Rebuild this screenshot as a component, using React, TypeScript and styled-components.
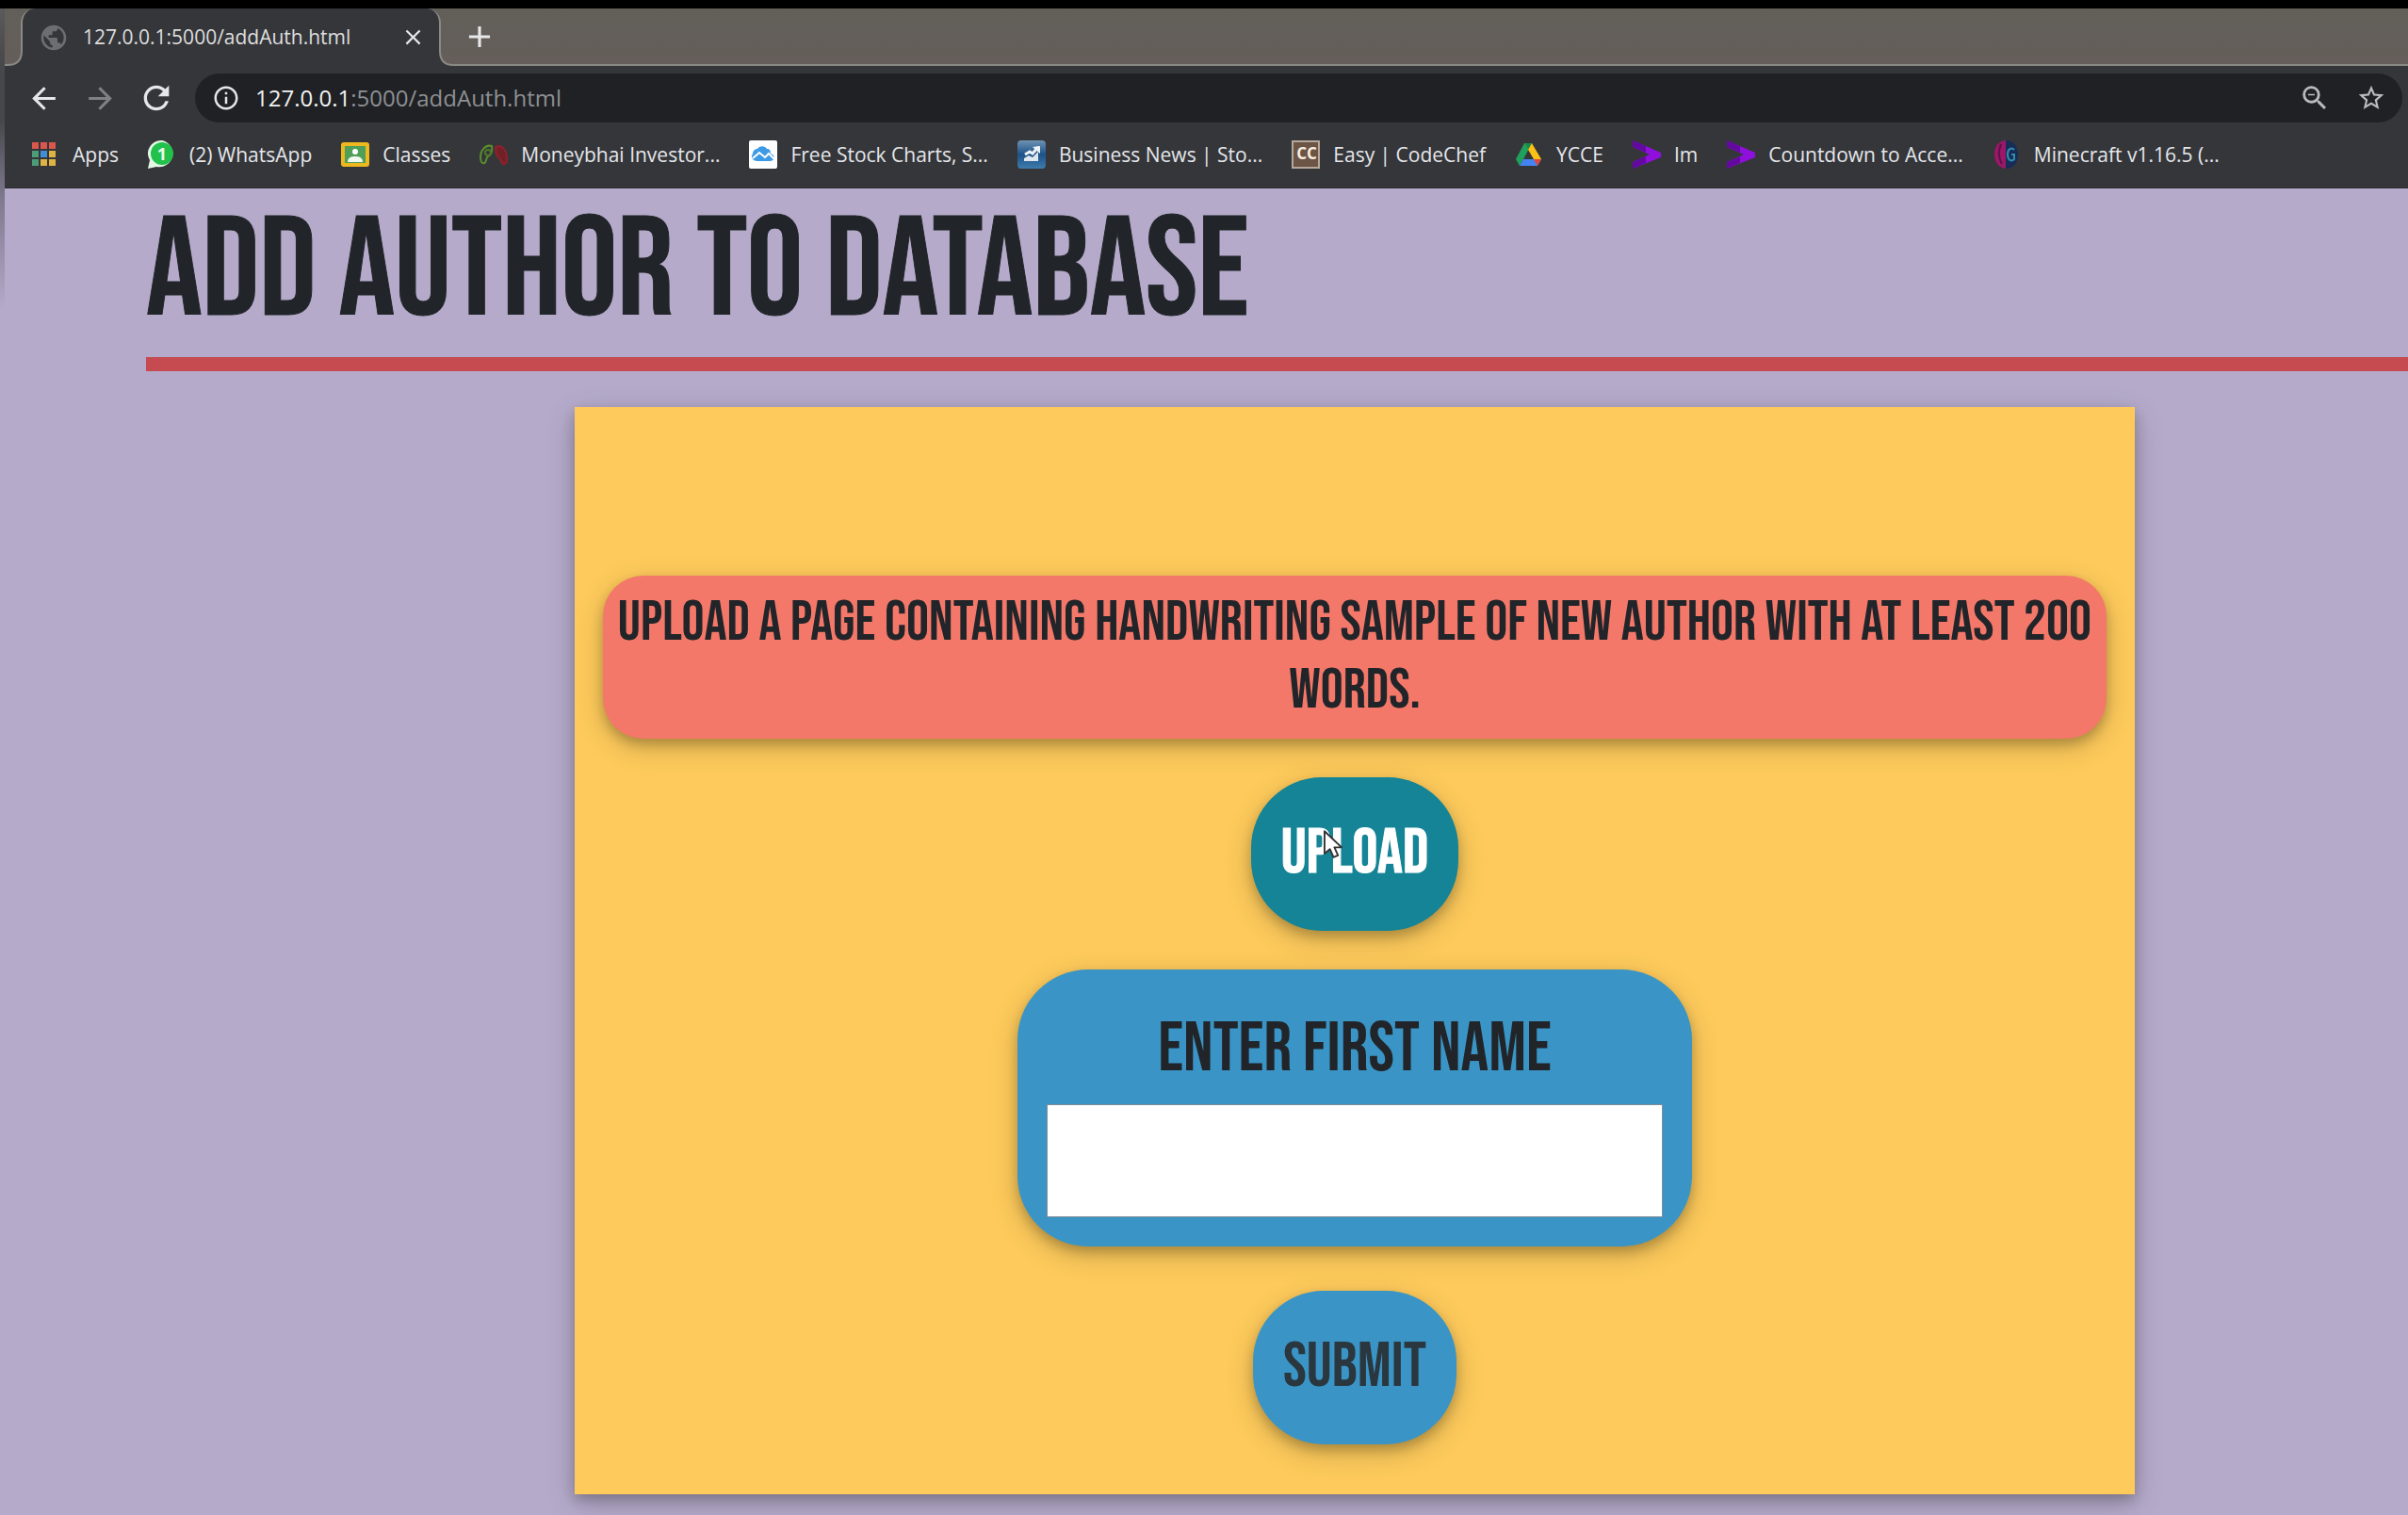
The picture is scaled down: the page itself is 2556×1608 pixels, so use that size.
import React, { useState } from 'react';
import styled, { createGlobalStyle, css } from 'styled-components';
import {
  MdAdd,
  MdArrowBack,
  MdArrowForward,
  MdClose,
  MdInfoOutline,
  MdPublic,
  MdRefresh,
  MdStarBorder,
  MdZoomOut,
} from 'react-icons/md';

const colors = {
  chrome: '#35363a',
  strip: '#625f59',
  stripLine: '#8b8984',
  omnibox: '#202124',
  page: '#b5aaca',
  ink: '#212529',
  rule: '#c54b50',
  card: '#fdca5b',
  notice: '#f47869',
  teal: '#148496',
  blue: '#3a95c6',
};

const uiFont = css`
  font-family: 'Open Sans', 'Noto Sans', sans-serif;
`;

const raised = css`
  box-shadow: 0 6px 12px rgba(0, 0, 0, 0.2), 0 9px 30px rgba(0, 0, 0, 0.19);
`;

const GlobalStyle = createGlobalStyle`
  *, *::before, *::after { box-sizing: border-box; }
  html { background: ${colors.page}; }
  body { margin: 0; overflow: hidden; }
  button { border: 0; padding: 0; background: none; font: inherit; color: inherit; cursor: default; }
`;

const Screen = styled.div`
  display: flex;
  min-height: 100vh;
  border-top: 9px solid #000;
  background: ${colors.page};
`;

const ScreenEdge = styled.div`
  flex: 0 0 5px;
  background: linear-gradient(
    #5a595b 0,
    #48484c 60px,
    #48484c 120px,
    #7f788e 200px,
    ${colors.page} 320px
  );
`;

const Browser = styled.div`
  flex: 1;
  min-width: 0;
`;

/* Tab strip */

const TabStrip = styled.div`
  ${uiFont}
  display: flex;
  align-items: flex-end;
  height: 61px;
  color: #dedede;
  background: linear-gradient(${colors.strip}, #655e5a);
`;

const TabFoot = styled.svg`
  flex: none;
  display: block;
`;

const Tab = styled.div`
  display: flex;
  align-items: center;
  gap: 15px;
  width: 446px;
  height: 61px;
  margin: 0 -2px;
  padding: 0 14px 0 17px;
  border: solid ${colors.stripLine};
  border-width: 0 2px;
  border-radius: 15px 15px 0 0;
  clip-path: inset(0 0 15px 0);
  background: ${colors.chrome};
`;

const TabBase = styled.div`
  display: grid;
  background: linear-gradient(transparent 40px, ${colors.chrome} 40px);
`;

const TabTitle = styled.span`
  flex: 1;
  padding-bottom: 2px;
  font-size: 21px;
  line-height: 28px;
  white-space: nowrap;
`;

const StripRest = styled.div`
  flex: 1;
  display: flex;
  align-items: center;
  height: 61px;
  padding-left: 7px;
  border-bottom: 2px solid ${colors.stripLine};
`;

const IconButton = styled.button<{ $size: number; $dim?: boolean }>`
  flex: none;
  display: flex;
  align-items: center;
  justify-content: center;
  width: ${(p) => p.$size}px;
  height: ${(p) => p.$size}px;
  color: ${(p) => (p.$dim ? '#808185' : '#e6e7e9')};

  svg {
    flex: none;
  }
`;

/* Address row */

const Toolbar = styled.div`
  ${uiFont}
  background: ${colors.chrome};
  border-bottom: 1px solid #2c2a30;
`;

const NavRow = styled.nav`
  display: flex;
  align-items: center;
  padding: 8px 6px 0 23px;
`;

const NavButtons = styled.div`
  display: flex;
  gap: 24px;
  margin-right: 23px;
`;

const Omnibox = styled.div`
  flex: 1;
  display: flex;
  align-items: center;
  gap: 16px;
  height: 52px;
  padding: 0 17px 0 18px;
  border-radius: 26px;
  background: ${colors.omnibox};
`;

const Address = styled.div`
  flex: 1;
  outline: none;
  font-size: 24px;
  line-height: 32px;
  white-space: nowrap;
  color: #8d9094;
`;

const Host = styled.span`
  color: #f1f2f3;
`;

const OmniActions = styled.div`
  display: flex;
  align-items: center;
  gap: 27px;
  color: #b9bbbe;

  button {
    color: inherit;
  }
`;

/* Bookmarks */

const Bookmarks = styled.div`
  display: flex;
  align-items: center;
  gap: 31px;
  height: 69px;
  padding: 0 0 2px 28px;
`;

const Bookmark = styled.a`
  flex: none;
  display: flex;
  align-items: center;
  gap: 14px;
  color: #e4e6ea;
  text-decoration: none;
  font-size: 21px;
  line-height: 28px;
  white-space: nowrap;

  svg {
    flex: none;
    display: block;
    width: 30px;
    height: 32px;
  }
`;

/* Page */

const Page = styled.main`
  font-family: 'Bebas Neue', Oswald, 'Liberation Sans', sans-serif;
  color: ${colors.ink};
  padding-bottom: 20px;
`;

const PageHeader = styled.header`
  margin-left: 150px;
  border-bottom: 15px solid ${colors.rule};
`;

const PageTitle = styled.h1`
  margin: 0;
  font-size: 149px;
  line-height: 179px;
  font-weight: 500;
  white-space: nowrap;
  -webkit-text-stroke: 1px;
`;

const Card = styled.section`
  ${raised}
  display: flex;
  flex-direction: column;
  align-items: center;
  gap: 41px;
  margin: 38px 290px 0 605px;
  padding: 179px 30px 53px;
  background: ${colors.card};
`;

const Notice = styled.p`
  ${raised}
  align-self: stretch;
  margin: 0;
  padding: 14px 12px 15px;
  border-radius: 43px;
  background: ${colors.notice};
  font-size: 60px;
  line-height: 72px;
  text-align: center;
`;

const PillButton = styled.button<{ $tone: 'teal' | 'blue' }>`
  ${raised}
  position: relative;
  padding: 41px 32px 42px;
  border-radius: 75px;
  background: ${(p) => colors[p.$tone]};
  color: ${(p) => (p.$tone === 'teal' ? '#fff' : '#2a373f')};
  font-size: 67px;
  line-height: 80px;
  -webkit-text-stroke: ${(p) => (p.$tone === 'teal' ? '1px' : '0')};
`;

const Pointer = styled.svg`
  position: absolute;
  left: 77px;
  top: 56px;
  width: 20px;
  height: 30px;
`;

const NameForm = styled.form`
  display: flex;
  flex-direction: column;
  align-items: center;
  gap: 47px;
`;

const NameField = styled.div`
  ${raised}
  display: flex;
  flex-direction: column;
  align-items: center;
  gap: 14px;
  padding: 41px 31px 31px;
  border-radius: 75px;
  background: ${colors.blue};
`;

const NameLabel = styled.label`
  font-size: 74px;
  line-height: 88px;
`;

const NameInput = styled.input`
  width: 654px;
  height: 120px;
  padding: 0 16px;
  border: 1px solid #7d8f99;
  border-radius: 0;
  outline: none;
  background: #fff;
  color: ${colors.ink};
  font: inherit;
  font-size: 67px;
`;

/* Favicons */

const AppsIcon = () => (
  <svg viewBox="0 0 30 32" aria-hidden="true">
    {['#d9574c', '#d9574c', '#d9574c', '#4b9c77', '#3f8ed6', '#dfb244', '#4b9c77', '#dfb244', '#dfb244'].map(
      (fill, i) => (
        <rect key={i} x={1 + (i % 3) * 9} y={3 + Math.floor(i / 3) * 9} width="7" height="7" fill={fill} />
      ),
    )}
  </svg>
);

const WhatsAppIcon = () => (
  <svg viewBox="0 0 30 32" aria-hidden="true">
    <path d="M15 1a14 14 0 1 1-6 28L0 31l2-9A14 14 0 0 1 15 1z" fill="#e3f7e6" />
    <circle cx="15" cy="15" r="12" fill="#22c14b" />
    <text x="15" y="22" textAnchor="middle" fontFamily="Open Sans, sans-serif" fontWeight="700" fontSize="18" fill="#eafbe9">
      1
    </text>
  </svg>
);

const ClassesIcon = () => (
  <svg viewBox="0 0 30 32" aria-hidden="true">
    <rect x="0" y="3" width="30" height="26" rx="3" fill="#edb91e" />
    <rect x="4" y="7" width="22" height="18" fill="#4f9f58" />
    <circle cx="15" cy="13" r="3" fill="#fff" />
    <path d="M7 24c0-5 4-6 8-6s8 1 8 6z" fill="#f1f8ef" />
  </svg>
);

const MoneybhaiIcon = () => (
  <svg viewBox="0 0 30 32" aria-hidden="true" fill="none" strokeWidth="2">
    <path d="M13 7C6 5 1 12 1 19c0 5 2 7 4 6 3-1 1-5 4-7 3-1 5-5 4-11z" stroke="#5a8f2c" />
    <circle cx="9" cy="14" r="3" stroke="#4c7a2a" />
    <path d="M17 8c6-3 11 2 12 10 1 6-1 9-4 8-2-1-2-4-4-6-3-2-4-6-4-12z" fill="#7a1f28" stroke="#8c222b" />
    <path d="M20 10l6 12M24 10l3 7" stroke="#55262b" strokeWidth="1" />
  </svg>
);

const ChartsIcon = () => (
  <svg viewBox="0 0 30 32" aria-hidden="true">
    <rect y="1" width="30" height="30" rx="2" fill="#fff" />
    <path d="M8 23a5 5 0 0 1-4-8 5 5 0 0 1 5-5 6 6 0 0 1 10 0c3 0 4 2 4 5 5 1 5 8-1 8z" fill="#3d9be5" />
    <path d="M4 20l7-6 6 5 4-4 6 6" fill="none" stroke="#fff" strokeWidth="2" />
  </svg>
);

const NewsIcon = () => (
  <svg viewBox="0 0 30 32" aria-hidden="true">
    <defs>
      <linearGradient id="news" x1="0" y1="0" x2="0" y2="1">
        <stop offset="0" stopColor="#6f93b3" />
        <stop offset="0.5" stopColor="#1d5288" />
        <stop offset="1" stopColor="#3f7cae" />
      </linearGradient>
    </defs>
    <rect y="1" width="30" height="30" rx="4" fill="url(#news)" />
    <path d="M8 16l5-3 3 2 6-7" fill="none" stroke="#eef3f8" strokeWidth="3" />
    <path d="M16 8l8-1v8z" fill="#eef3f8" />
    <path d="M7 20l5-3 4 2 6-6v10H7z" fill="#dfe8f0" />
  </svg>
);

const CodeChefIcon = () => (
  <svg viewBox="0 0 30 32" aria-hidden="true">
    <rect x="1" y="2" width="28" height="28" fill="#6d5545" stroke="#b6a89c" strokeWidth="2" />
    <text x="16" y="21" textAnchor="middle" fontFamily="Open Sans, sans-serif" fontWeight="700" fontSize="17" fill="#f7ece0">
      CC
    </text>
  </svg>
);

const DriveIcon = () => (
  <svg viewBox="0 0 30 32" aria-hidden="true">
    <path d="M10 4h8L9 21l-4 7-4-7z" fill="#1fa15d" />
    <path d="M10 4h8l10 17h-8z" fill="#fbc116" />
    <path d="M10 4h8l-4 7z" fill="#178a4c" />
    <path d="M9 21h19l-4 7H5z" fill="#4384f0" />
    <path d="M20 21h8l-4 7z" fill="#e0463a" />
  </svg>
);

const AccentureIcon = () => (
  <svg viewBox="0 0 30 32" aria-hidden="true">
    <path d="M0 1l30 13v5L0 31v-7l18-8L0 8z" fill="#8f10dc" />
    <path d="M0 1l14 6v7L0 8zM0 31l14-6v-7L0 24z" fill="#6409a0" />
  </svg>
);

const MinecraftIcon = () => (
  <svg viewBox="0 0 30 32" aria-hidden="true">
    <path d="M15 1C6 1 2 8 2 16s5 15 13 15V1z" fill="#9c1768" />
    <path d="M14 1c9 0 13 7 13 15s-4 15-13 15V1z" fill="#182c58" />
    <path d="M9 5c-3 7-3 14 1 21" fill="none" stroke="#5a1348" strokeWidth="2" />
    <path d="M23 11c-3-3-7-1-7 5s4 8 7 5v-5h-3" fill="none" stroke="#2f8fae" strokeWidth="2" />
  </svg>
);

const bookmarks: { label: string; Icon: React.FC }[] = [
  { label: 'Apps', Icon: AppsIcon },
  { label: '(2) WhatsApp', Icon: WhatsAppIcon },
  { label: 'Classes', Icon: ClassesIcon },
  { label: 'Moneybhai Investor...', Icon: MoneybhaiIcon },
  { label: 'Free Stock Charts, S...', Icon: ChartsIcon },
  { label: 'Business News | Sto...', Icon: NewsIcon },
  { label: 'Easy | CodeChef', Icon: CodeChefIcon },
  { label: 'YCCE', Icon: DriveIcon },
  { label: 'Im', Icon: AccentureIcon },
  { label: 'Countdown to Acce...', Icon: AccentureIcon },
  { label: 'Minecraft v1.16.5 (...', Icon: MinecraftIcon },
];

export default function App() {
  const [firstName, setFirstName] = useState('');

  return (
    <Screen>
      <GlobalStyle />
      <ScreenEdge />
      <Browser>
        <TabStrip>
          <TabFoot width="19" height="16" viewBox="0 0 19 16" aria-hidden="true">
            <path d="M0 15h3c10 0 15-5 15-15h1v16H0z" fill={colors.chrome} />
            <path d="M0 15h3c10 0 15-5 15-15" fill="none" stroke={colors.stripLine} strokeWidth="2" />
          </TabFoot>
          <TabBase>
            <Tab>
              <MdPublic size={32} color="#6d6e71" />
              <TabTitle>127.0.0.1:5000/addAuth.html</TabTitle>
              <IconButton $size={28} aria-label="Close tab">
                <MdClose size={27} />
              </IconButton>
            </Tab>
          </TabBase>
          <TabFoot width="16" height="16" viewBox="0 0 16 16" aria-hidden="true">
            <path d="M16 15h-1C6 15 1 10 1 0H0v16h16z" fill={colors.chrome} />
            <path d="M16 15h-1C6 15 1 10 1 0" fill="none" stroke={colors.stripLine} strokeWidth="2" />
          </TabFoot>
          <StripRest>
            <IconButton $size={40} aria-label="New tab">
              <MdAdd size={38} />
            </IconButton>
          </StripRest>
        </TabStrip>

        <Toolbar>
          <NavRow>
            <NavButtons>
              <IconButton $size={36} aria-label="Back">
                <MdArrowBack size={37} />
              </IconButton>
              <IconButton $size={36} $dim aria-label="Forward">
                <MdArrowForward size={37} />
              </IconButton>
              <IconButton $size={36} aria-label="Reload">
                <MdRefresh size={40} />
              </IconButton>
            </NavButtons>
            <Omnibox>
              <IconButton $size={30} aria-label="Site information">
                <MdInfoOutline size={30} />
              </IconButton>
              <Address role="textbox" aria-label="Address" contentEditable suppressContentEditableWarning spellCheck={false}>
                <Host>127.0.0.1</Host>:5000/addAuth.html
              </Address>
              <OmniActions>
                <IconButton $size={34} aria-label="Zoom">
                  <MdZoomOut size={34} />
                </IconButton>
                <IconButton $size={32} aria-label="Bookmark this page">
                  <MdStarBorder size={32} />
                </IconButton>
              </OmniActions>
            </Omnibox>
          </NavRow>
          <Bookmarks>
            {bookmarks.map(({ label, Icon }) => (
              <Bookmark key={label} href="#">
                <Icon />
                {label}
              </Bookmark>
            ))}
          </Bookmarks>
        </Toolbar>

        <Page>
          <PageHeader>
            <PageTitle>ADD AUTHOR TO DATABASE</PageTitle>
          </PageHeader>
          <Card>
            <Notice>
              UPLOAD A PAGE CONTAINING HANDWRITING SAMPLE OF NEW AUTHOR WITH AT LEAST 200 WORDS.
            </Notice>
            <PillButton type="button" $tone="teal">
              UPLOAD
              <Pointer viewBox="0 0 21 31" aria-hidden="true">
                <path
                  d="M1 1v25l6-5 4 9 5-2-4-9h8z"
                  fill="#fff"
                  stroke="#333"
                  strokeWidth="2"
                  strokeLinejoin="round"
                />
              </Pointer>
            </PillButton>
            <NameForm onSubmit={(e) => e.preventDefault()}>
              <NameField>
                <NameLabel htmlFor="first-name">ENTER FIRST NAME</NameLabel>
                <NameInput
                  id="first-name"
                  type="text"
                  value={firstName}
                  onChange={(e) => setFirstName(e.target.value)}
                />
              </NameField>
              <PillButton type="submit" $tone="blue">
                SUBMIT
              </PillButton>
            </NameForm>
          </Card>
        </Page>
      </Browser>
    </Screen>
  );
}
